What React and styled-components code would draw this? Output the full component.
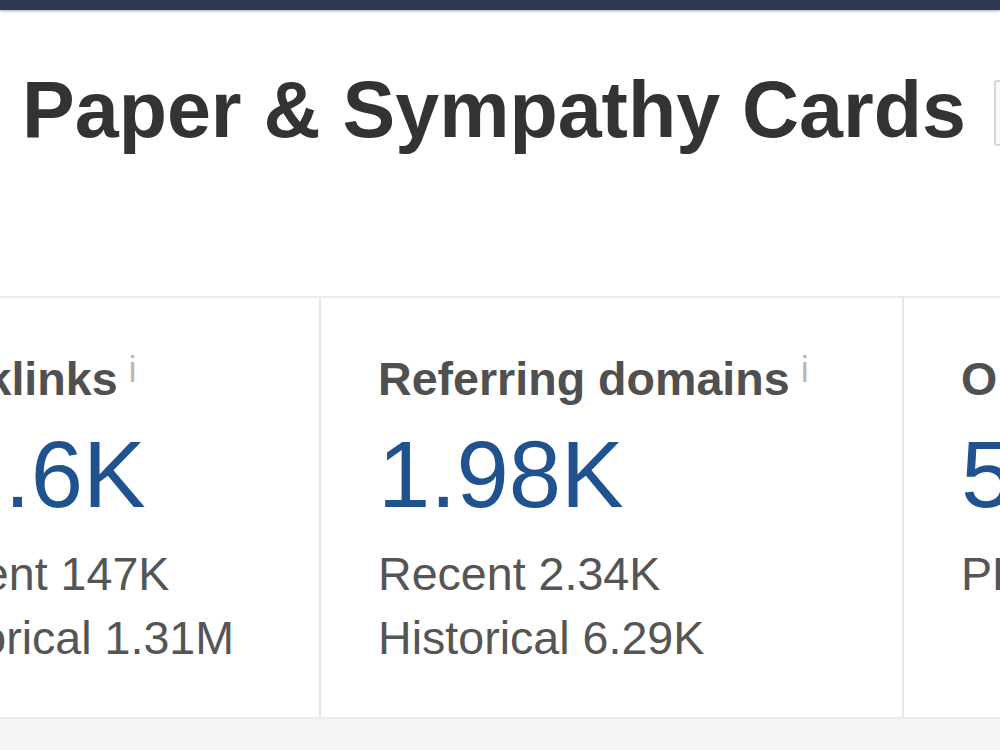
import React from "react";
import styled, { createGlobalStyle } from "styled-components";

const GlobalStyle = createGlobalStyle`
  html, body {
    margin: 0;
    padding: 0;
    overflow: hidden;
    background: #ffffff;
    font-family: "Liberation Sans", Arial, sans-serif;
  }
`;

const Page = styled.div`
  display: flex;
  flex-direction: column;
  width: 1000px;
  height: 750px;
  overflow: hidden;
  background: #f4f5f7;
`;

const TopBar = styled.div`
  height: 10px;
  flex-shrink: 0;
  background: #2e3a51;
  box-shadow: 0 1px 3px rgba(0, 0, 0, 0.35);
  position: relative;
  z-index: 1;
`;

const Content = styled.div`
  background: #ffffff;
  flex-shrink: 0;
`;

const TitleRow = styled.div`
  display: flex;
  align-items: flex-start;
  gap: 28px;
  padding: 60px 0 0 22px;
  height: 286px;
  box-sizing: border-box;
`;

const Title = styled.h1`
  margin: 0;
  flex-shrink: 0;
  font-size: 79px;
  line-height: 1;
  font-weight: 700;
  color: #333333;
  white-space: nowrap;
`;

const Tag = styled.div`
  flex-shrink: 0;
  width: 80px;
  height: 62px;
  margin-top: 10px;
  border: 2px solid #d6d6d6;
  border-radius: 3px;
  background: #fafafa;
`;

const Cards = styled.div`
  display: flex;
  margin-left: -157px;
  border-top: 2px solid #ebebeb;
  border-bottom: 2px solid #ebebeb;
  background: #ffffff;
`;

const Card = styled.div`
  flex-shrink: 0;
  width: ${(p) => p.$width}px;
  box-sizing: border-box;
  padding: 54px 0 47px 57px;
  border-right: 2px solid #e8e8e8;
  white-space: nowrap;
`;

const Label = styled.div`
  font-size: 46.6px;
  line-height: 1;
  font-weight: 700;
  color: #505050;
`;

const Info = styled.span`
  font-size: 36px;
  font-weight: 400;
  color: #b8b8b8;
  margin-left: 11px;
  vertical-align: 13px;
`;

const Value = styled.div`
  margin-top: 25px;
  font-size: 94px;
  line-height: 1;
  font-weight: 400;
  font-kerning: none;
  color: #215290;
`;

const Stats = styled.div`
  margin-top: 20px;
  font-size: 46.6px;
  line-height: 64px;
  color: #555555;
`;

const cards = [
  { label: "Backlinks", value: "11.6K", rows: ["Recent 147K", "Historical 1.31M"], width: 478 },
  { label: "Referring domains", value: "1.98K", rows: ["Recent 2.34K", "Historical 6.29K"], width: 583 },
  { label: "Organic keywords", value: "5.12K", rows: ["PPC 0", ""], width: 600 },
];

export default function App() {
  return (
    <>
      <GlobalStyle />
      <Page>
        <TopBar />
        <Content>
          <TitleRow>
            <Title>Paper &amp; Sympathy Cards</Title>
            <Tag />
          </TitleRow>
          <Cards>
            {cards.map((c) => (
              <Card key={c.label} $width={c.width}>
                <Label>
                  {c.label}
                  <Info>i</Info>
                </Label>
                <Value>{c.value}</Value>
                <Stats>
                  {c.rows.map((r, i) => (
                    <div key={i}>{r || "\u00a0"}</div>
                  ))}
                </Stats>
              </Card>
            ))}
          </Cards>
        </Content>
      </Page>
    </>
  );
}
